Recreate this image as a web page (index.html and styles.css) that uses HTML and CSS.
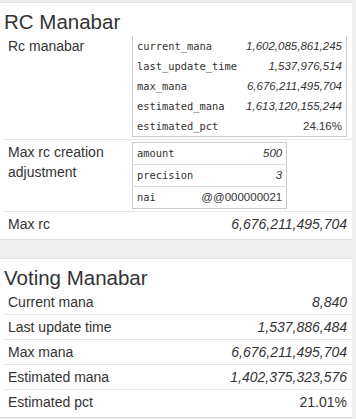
FILE: index.html
```html
<!DOCTYPE html>
<html lang="en">
<head>
  <meta charset="UTF-8">
  <meta name="viewport" content="width=device-width, initial-scale=1.0">
  <title>Account Manabars</title>
  <link rel="stylesheet" href="styles.css">
</head>
<body>
  <div class="page">
    <div class="panel">
      <h3 class="panel-title">RC Manabar</h3>
      <table class="props">
        <tr>
          <td class="prop-name">Rc manabar</td>
          <td class="prop-value">
            <table class="obj obj-plain obj-full">
              <tr><td class="key">current_mana</td><td class="num">1,602,085,861,245</td></tr>
              <tr><td class="key">last_update_time</td><td class="num">1,537,976,514</td></tr>
              <tr><td class="key">max_mana</td><td class="num">6,676,211,495,704</td></tr>
              <tr><td class="key">estimated_mana</td><td class="num">1,613,120,155,244</td></tr>
              <tr><td class="key">estimated_pct</td><td class="str">24.16%</td></tr>
            </table>
          </td>
        </tr>
        <tr>
          <td class="prop-name">Max rc creation adjustment</td>
          <td class="prop-value">
            <table class="obj">
              <tr><td class="key">amount</td><td class="num">500</td></tr>
              <tr><td class="key">precision</td><td class="num">3</td></tr>
              <tr><td class="key">nai</td><td class="str">@@000000021</td></tr>
            </table>
          </td>
        </tr>
        <tr>
          <td class="prop-name">Max rc</td>
          <td class="prop-value num">6,676,211,495,704</td>
        </tr>
      </table>
    </div>

    <div class="panel">
      <h3 class="panel-title">Voting Manabar</h3>
      <table class="props">
        <tr><td class="prop-name">Current mana</td><td class="prop-value num">8,840</td></tr>
        <tr><td class="prop-name">Last update time</td><td class="prop-value num">1,537,886,484</td></tr>
        <tr><td class="prop-name">Max mana</td><td class="prop-value num">6,676,211,495,704</td></tr>
        <tr><td class="prop-name">Estimated mana</td><td class="prop-value num">1,402,375,323,576</td></tr>
        <tr><td class="prop-name">Estimated pct</td><td class="prop-value str">21.01%</td></tr>
      </table>
    </div>
  </div>
</body>
</html>
```

FILE: styles.css
```css
body {
  margin: 0;
  background-color: #eeeeee;
  font-family: "Liberation Sans", Arial, sans-serif;
  font-size: 14px;
  color: #333;
}
.page {
  padding: 2px 4px 0 0;
}
.panel {
  background: #fff;
  border-top: 1px solid #dddddd;
  border-bottom: 1px solid #dddddd;
  padding: 0 0 3px 4px;
  margin-bottom: 18px;
}
.panel-title {
  margin: 0;
  padding-top: 6px;
  font-size: 20.5px;
  font-weight: normal;
  line-height: 25px;
}

/* outer label / value table */
.props {
  width: 100%;
  border-collapse: collapse;
}
.props td {
  padding: 2px 5px 2px 4px;
  line-height: 20px;
  vertical-align: top;
  border-top: 1px solid #e6e6e6;
}
.props tr:first-child td {
  border-top: none;
}
.prop-name {
  width: 115px;
}
.prop-value {
  text-align: right;
}

/* nested object tables */
.obj {
  border-collapse: collapse;
  border: 1px solid #cccccc;
}
.obj td {
  padding: 2px 4px;
  line-height: 17px;
  border-top: 1px solid #dddddd;
}
.obj-plain {
  border-top: none;
}
.obj-plain td {
  line-height: 16px;
  border-top: none;
}
.obj-full {
  width: 100%;
}
.key {
  font-family: "DejaVu Sans Mono", monospace;
  font-size: 10.4px;
  text-align: left;
}
.obj .num,
.obj .str {
  font-size: 11.5px;
  text-align: right;
}
.num {
  font-style: italic;
}
```
